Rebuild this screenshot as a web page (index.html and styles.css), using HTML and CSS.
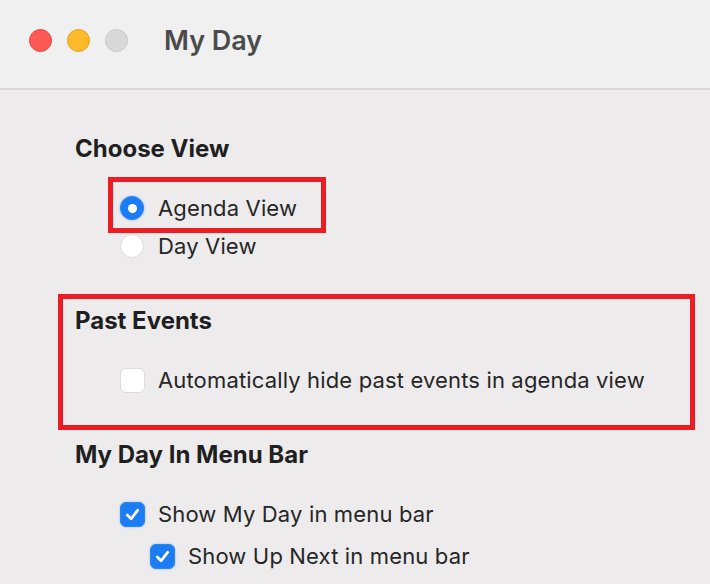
FILE: index.html
```html
<!DOCTYPE html>
<html lang="en">
<head>
<meta charset="utf-8">
<title>My Day</title>
<link rel="stylesheet" href="styles.css">
</head>
<body>
<div class="window">
  <header class="titlebar">
    <div class="lights">
      <span class="light red"></span>
      <span class="light yellow"></span>
      <span class="light gray"></span>
    </div>
    <h1 class="title">My Day</h1>
  </header>
  <main class="content">
    <section class="group">
      <h2 class="heading">Choose View</h2>
      <div class="rows">
        <label class="row highlight-row">
          <span class="radio checked"></span>
          <span class="label">Agenda View</span>
        </label>
        <label class="row">
          <span class="radio"></span>
          <span class="label">Day View</span>
        </label>
      </div>
    </section>
    <section class="group highlight-group">
      <h2 class="heading">Past Events</h2>
      <div class="rows">
        <label class="row">
          <span class="check"></span>
          <span class="label">Automatically hide past events in agenda view</span>
        </label>
      </div>
    </section>
    <section class="group">
      <h2 class="heading">My Day In Menu Bar</h2>
      <div class="rows">
        <label class="row">
          <span class="check checked"><svg viewBox="0 0 24 24" width="25" height="25"><path d="M6.5 12.5 L10.5 16.5 L17.5 7.5" fill="none" stroke="#fff" stroke-width="2.8" stroke-linecap="round" stroke-linejoin="round"/></svg></span>
          <span class="label">Show My Day in menu bar</span>
        </label>
        <label class="row sub sub-row">
          <span class="check checked"><svg viewBox="0 0 24 24" width="25" height="25"><path d="M6.5 12.5 L10.5 16.5 L17.5 7.5" fill="none" stroke="#fff" stroke-width="2.8" stroke-linecap="round" stroke-linejoin="round"/></svg></span>
          <span class="label">Show Up Next in menu bar</span>
        </label>
      </div>
    </section>
  </main>
</div>
</body>
</html>
```

FILE: styles.css
```css
* { box-sizing: border-box; }
html, body { margin: 0; padding: 0; }
body {
  width: 710px;
  height: 584px;
  overflow: hidden;
  background: #edebec;
  font-family: Inter, "Noto Sans", "Liberation Sans", sans-serif;
  color: #262626;
}
.window { display: flex; flex-direction: column; height: 584px; }
.titlebar {
  height: 90px;
  flex: none;
  background: #f0f0f0;
  border-bottom: 2px solid #d8d7d8;
  display: flex;
  align-items: center;
  padding-left: 29px;
  padding-bottom: 8px;
}
.lights { display: flex; gap: 15px; }
.light {
  width: 23px; height: 23px; border-radius: 50%;
  display: block;
}
.red { background: #fd5a56; border: 1px solid #e8433f; }
.yellow { background: #fdbb2c; border: 1px solid #e5a21e; }
.gray { background: #d9d9d9; border: 1px solid #c8c8c8; }
.title {
  margin: 0 0 0 36px;
  font-size: 27px;
  font-weight: 600;
  color: #4b4b4b;
}
.content {
  padding: 46px 0 0 75px;
  display: flex;
  flex-direction: column;
  gap: 43px;
}
.group { position: relative; }
.heading {
  margin: 0;
  height: 26px;
  line-height: 26px;
  font-size: 24px;
  font-weight: 700;
  color: #1f1f1f;
}
.rows {
  margin-top: 27px;
  padding-left: 45px;
  display: flex;
  flex-direction: column;
  align-items: flex-start;
}
.row {
  height: 38px;
  display: inline-flex;
  align-items: center;
  position: relative;
  font-size: 22px;
  letter-spacing: 0.15px;
}
.sub { margin-left: 30px; }
.sub-row { margin-top: 4px; }
.label { color: #262626; }
.radio {
  width: 24px; height: 24px; border-radius: 50%;
  background: #fff;
  border: 1px solid #dcdcdc;
  margin-right: 14px;
  flex: none;
  display: flex; align-items: center; justify-content: center;
}
.radio.checked {
  background: #1b7cf4;
  border-color: #2a86f7;
  box-shadow: 0 0 2px rgba(27,124,244,0.6);
}
.radio.checked::after {
  content: "";
  width: 9px; height: 9px; border-radius: 50%;
  background: #fff;
}
.check {
  width: 25px; height: 25px; border-radius: 6px;
  background: #fff;
  border: 1px solid #dcdcdc;
  margin-right: 13px;
  flex: none;
  display: flex; align-items: center; justify-content: center;
}
.check.checked {
  background: #1b7cf4;
  border-color: #2a86f7;
  box-shadow: 0 0 2px rgba(27,124,244,0.5);
}
.check svg { display: block; }
.highlight-row::after {
  content: "";
  position: absolute;
  left: -12px; right: -29px; top: -12px; bottom: -6px;
  border: 5px solid #ec1c24;
  pointer-events: none;
}
.highlight-group::after {
  content: "";
  position: absolute;
  left: -17px; right: 15px; top: -14px; bottom: -31px;
  border: 5px solid #ec1c24;
  pointer-events: none;
}
```
